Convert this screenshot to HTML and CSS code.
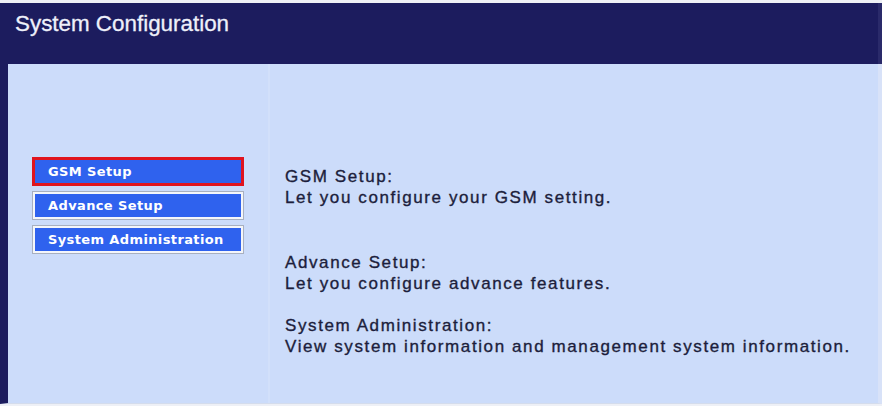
FILE: index.html
```html
<!DOCTYPE html>
<html>
<head>
<meta charset="utf-8">
<link rel="stylesheet" href="styles.css">
</head>
<body>
<div class="page">
  <div class="header"><h1 class="title">System Configuration</h1></div>
  <div class="main">
    <div class="side">
      <div class="menu">
        <div class="btn active">GSM Setup</div>
        <div class="btn">Advance Setup</div>
        <div class="btn">System Administration</div>
      </div>
    </div>
    <div class="content">
      <div class="group g1">
        <div class="line">GSM Setup:</div>
        <div class="line">Let you configure your GSM setting.</div>
      </div>
      <div class="group g2">
        <div class="line">Advance Setup:</div>
        <div class="line">Let you configure advance features.</div>
      </div>
      <div class="group g3">
        <div class="line">System Administration:</div>
        <div class="line">View system information and management system information.</div>
      </div>
    </div>
  </div>
</div>
</body>
</html>
```

FILE: styles.css
```css
html, body {
  margin: 0;
  padding: 0;
  background: #eef0f6;
}
.page {
  width: 882px;
  height: 406px;
  padding-top: 3px;
  box-sizing: border-box;
  display: flex;
  flex-direction: column;
}
.header {
  height: 61px;
  background: #1c1c5e;
  padding: 8px 0 0 15px;
  box-sizing: border-box;
  border-right: 4px solid #2a2a6a;
}
.title {
  margin: 0;
  font-family: "Liberation Sans", Arial, sans-serif;
  font-weight: normal;
  font-size: 22.4px;
  line-height: 26px;
  color: #eef0fa;
  -webkit-text-stroke: 0.3px #eef0fa;
}
.main {
  height: 339px;
  display: flex;
  background: #ccdcfa;
  border-left: 8px solid #1c1c5e;
  border-right: 4px solid #d8e2f8;
  border-bottom: 1px solid #d4dcec;
}
.side {
  width: 262px;
  flex: none;
  padding: 93px 0 0 24px;
  box-sizing: border-box;
  border-right: 2px solid #d2e0fa;
}
.menu {
  width: 212px;
  display: flex;
  flex-direction: column;
  gap: 5px;
}
.btn {
  height: 29px;
  box-sizing: border-box;
  border: 1px solid #a8b0c0;
  box-shadow: inset 0 0 0 2px #f4f6fa;
  background: #2f62ee;
  color: #ffffff;
  font-family: "DejaVu Sans", Verdana, sans-serif;
  font-weight: bold;
  font-size: 13px;
  line-height: 27px;
  padding-left: 15px;
  letter-spacing: 0.38px;
}
.btn.active {
  border: 3px solid #e0141e;
  box-shadow: none;
  line-height: 23px;
  padding-left: 13px;
}
.content {
  flex: 1;
  padding: 102px 0 0 15px;
  font-family: "Liberation Sans", Arial, sans-serif;
  font-size: 17px;
  line-height: 21px;
  color: #1c1e3c;
  letter-spacing: 1.6px;
  -webkit-text-stroke: 0.35px #1c1e3c;
}
.g2 { margin-top: 44px; }
.g3 { margin-top: 21px; }
```
